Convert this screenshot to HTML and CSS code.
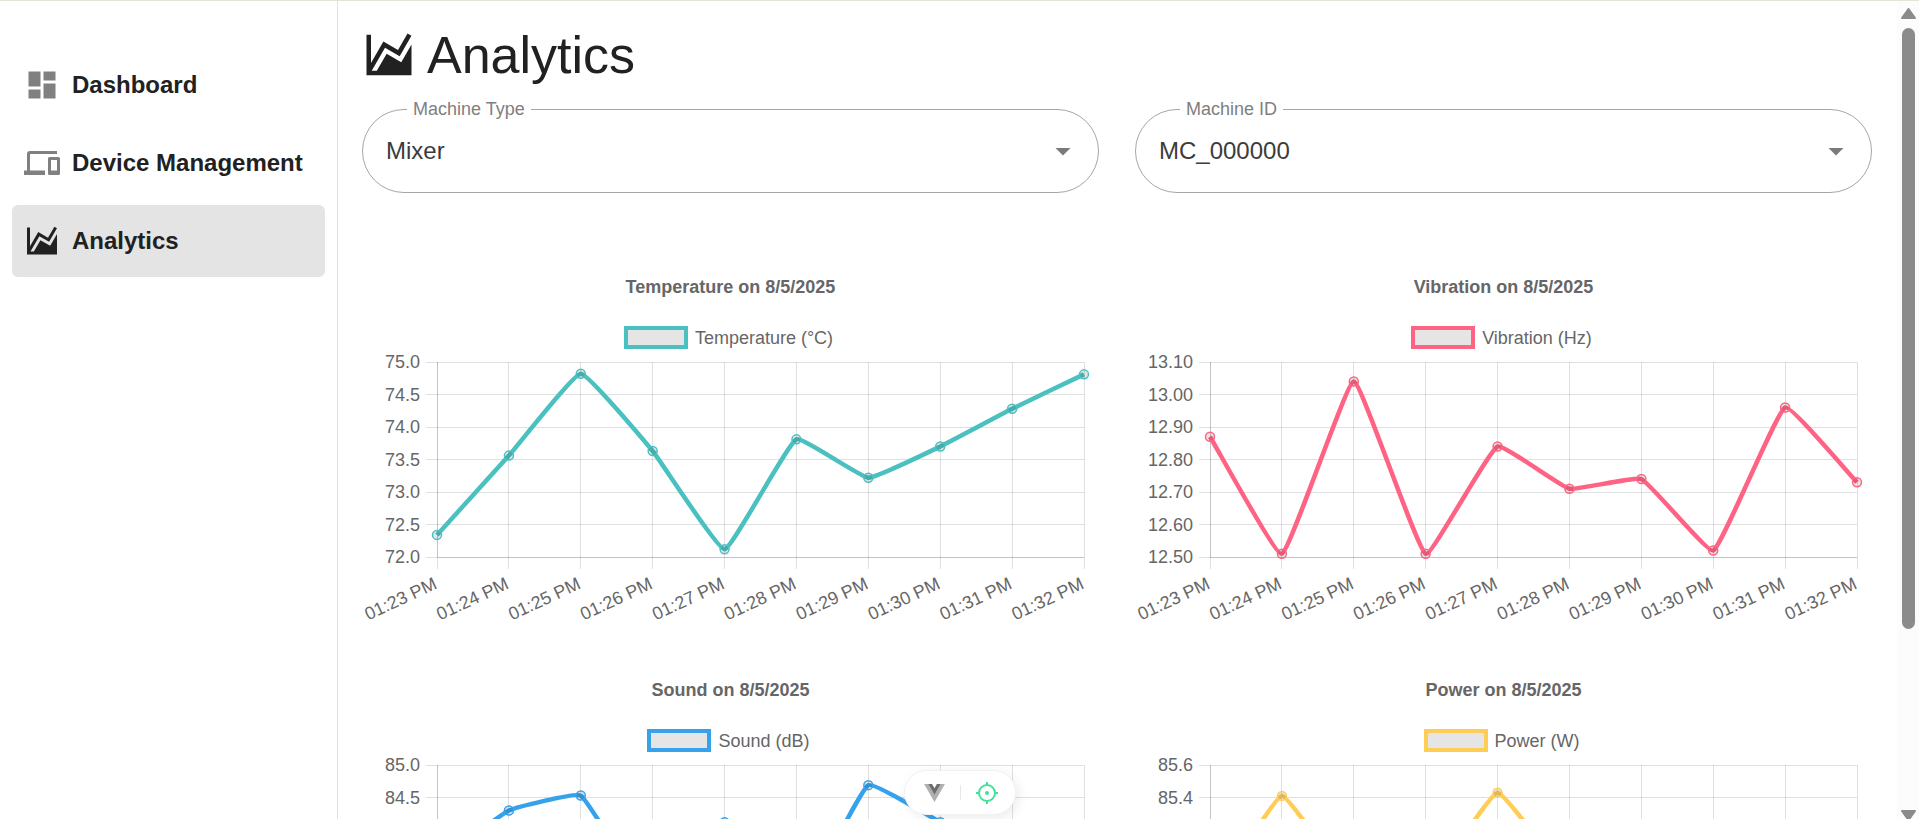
FILE: index.html
```html
<!DOCTYPE html>
<html lang="en">
<head>
<meta charset="utf-8">
<meta name="viewport" content="width=device-width, initial-scale=1">
<title>Analytics</title>
<link rel="stylesheet" href="styles.css">
</head>
<body>
<div class="app">
  <nav class="sidebar" aria-label="Main">
    <a class="nav-item" href="#dashboard">
      <svg class="nav-icon" viewBox="0 0 24 24" aria-hidden="true"><path d="M13,3V9H21V3M13,21H21V11H13M3,21H11V15H3M3,13H11V3H3V13Z"/></svg>
      <span>Dashboard</span>
    </a>
    <a class="nav-item" href="#devices">
      <svg class="nav-icon" viewBox="0 0 24 24" aria-hidden="true"><path d="M4,6H22V4H4A2,2 0 0,0 2,6V17H0V20H14V17H4V6M23,8H17A1,1 0 0,0 16,9V19A1,1 0 0,0 17,20H23A1,1 0 0,0 24,19V9A1,1 0 0,0 23,8M22,17H18V10H22V17Z"/></svg>
      <span>Device Management</span>
    </a>
    <a class="nav-item nav-item-active" href="#analytics" aria-current="page">
      <svg class="nav-icon" viewBox="0 0 24 24" aria-hidden="true"><path d="M17.45,15.18L22,7.31V21H2V3H4V15.54L9.5,6L16,9.78L20.24,2.45L21.97,3.45L16.74,12.5L10.23,8.75L4.31,19H6.57L10.96,11.44L17.45,15.18Z"/></svg>
      <span>Analytics</span>
    </a>
  </nav>

  <main class="content">
    <h1 class="page-title">
      <svg class="title-icon" viewBox="0 0 24 24" aria-hidden="true"><path d="M17.45,15.18L22,7.31V21H2V3H4V15.54L9.5,6L16,9.78L20.24,2.45L21.97,3.45L16.74,12.5L10.23,8.75L4.31,19H6.57L10.96,11.44L17.45,15.18Z"/></svg>
      <span>Analytics</span>
    </h1>

    <div class="filters">
      <div class="field">
        <label class="field-label" for="machine-type">Machine Type</label>
        <select class="field-select" id="machine-type"><option>Mixer</option></select>
        <svg class="field-arrow" viewBox="0 0 24 24" aria-hidden="true"><path d="M7,10L12,15L17,10H7Z"/></svg>
      </div>
      <div class="field">
        <label class="field-label" for="machine-id">Machine ID</label>
        <select class="field-select" id="machine-id"><option>MC_000000</option></select>
        <svg class="field-arrow" viewBox="0 0 24 24" aria-hidden="true"><path d="M7,10L12,15L17,10H7Z"/></svg>
      </div>
    </div>

    <div class="charts">
      <figure class="chart teal" data-chart="temperature">
        <figcaption class="chart-title">Temperature on 8/5/2025</figcaption>
        <div class="legend"><span class="legend-box"></span><span>Temperature (°C)</span></div>
      </figure>
      <figure class="chart pink" data-chart="vibration">
        <figcaption class="chart-title">Vibration on 8/5/2025</figcaption>
        <div class="legend"><span class="legend-box"></span><span>Vibration (Hz)</span></div>
      </figure>
      <figure class="chart blue" data-chart="sound">
        <figcaption class="chart-title">Sound on 8/5/2025</figcaption>
        <div class="legend"><span class="legend-box"></span><span>Sound (dB)</span></div>
      </figure>
      <figure class="chart yellow" data-chart="power">
        <figcaption class="chart-title">Power on 8/5/2025</figcaption>
        <div class="legend"><span class="legend-box"></span><span>Power (W)</span></div>
      </figure>
    </div>
  </main>

  <div class="scrollbar" aria-hidden="true">
    <svg class="scroll-arrow" viewBox="0 0 15 11"><path d="M7.5 1L14 10H1Z"/></svg>
    <div class="scroll-track"><div class="scroll-thumb"></div></div>
    <svg class="scroll-arrow" viewBox="0 0 15 11"><path d="M7.5 12L1 3H14Z"/></svg>
  </div>
</div>

<div class="devtools">
  <button class="devtools-button" type="button" aria-label="Toggle devtools">
    <svg class="vue-icon" viewBox="0 0 256 221" aria-hidden="true"><path fill="#b0b0b0" d="M0 0l128 220.8L256 0h-51.2L128 132.48 50.56 0z"/><path fill="#6e6e6e" d="M50.56 0L128 133.12 204.8 0h-47.36L128 51.2 97.92 0z"/></svg>
  </button>
  <span class="devtools-divider"></span>
  <button class="devtools-button" type="button" aria-label="Inspect component">
    <svg class="target-icon" viewBox="0 0 24 24" aria-hidden="true"><circle cx="12" cy="12" r="8"/><path d="M12 1V5M12 19V23M1 12H5M19 12H23"/><circle class="target-dot" cx="12" cy="12" r="1"/></svg>
  </button>
</div>
<script src="charts.js"></script>
</body>
</html>
```

FILE: styles.css
```css
* {
  box-sizing: border-box;
}

body {
  margin: 0;
  font-family: "Liberation Sans", Arial, sans-serif;
  color: #212121;
  background: #fff;
}

.app {
  display: flex;
  height: 100vh;
  border-top: 1px solid #e4e4d4;
}

.sidebar {
  display: flex;
  flex-direction: column;
  flex: none;
  gap: 6px;
  width: 338px;
  padding: 48px 12px;
  border-right: 1px solid #e0e0e0;
}

.nav-item {
  display: flex;
  align-items: center;
  gap: 12px;
  height: 72px;
  padding: 0 12px;
  border-radius: 6px;
  color: #212121;
  font-size: 24px;
  font-weight: 700;
  text-decoration: none;
  white-space: nowrap;
}

.nav-item-active {
  background: #e4e4e4;
}

.nav-icon {
  flex: none;
  width: 36px;
  height: 36px;
  fill: #808080;
}

.nav-item-active .nav-icon {
  fill: #212121;
}

.content {
  flex: 1;
  min-width: 0;
  padding: 24px 25px 24px 24px;
  overflow-y: auto;
  scrollbar-width: none;
}

.page-title {
  display: flex;
  align-items: center;
  gap: 11px;
  margin: 0 0 24px;
  font-size: 52px;
  font-weight: 400;
  line-height: 60px;
}

.title-icon {
  width: 54px;
  height: 54px;
  fill: #212121;
}

.filters,
.charts {
  display: grid;
  grid-template-columns: 1fr 1fr;
  column-gap: 36px;
}

.filters {
  margin-bottom: 68px;
}

.field {
  position: relative;
}

.field-label {
  position: absolute;
  top: -11px;
  left: 45px;
  padding: 0 6px;
  background: #fff;
  color: #808080;
  font-size: 18px;
  line-height: 22px;
}

.field-select {
  display: block;
  width: 100%;
  height: 84px;
  padding: 0 60px 2px 23px;
  border: 1px solid #a6a6a6;
  border-radius: 42px;
  appearance: none;
  background: none;
  color: #3c3c3c;
  font-family: inherit;
  font-size: 24px;
}

.field-arrow {
  position: absolute;
  top: 24px;
  right: 18px;
  width: 36px;
  height: 36px;
  fill: #7a7a7a;
  pointer-events: none;
}

.charts {
  row-gap: 35px;
}

.chart {
  margin: 0;
  color: #666;
  font-size: 18px;
  line-height: 22px;
}

.teal { --series: rgb(75, 192, 192); }
.pink { --series: rgb(255, 99, 132); }
.blue { --series: rgb(54, 162, 235); }
.yellow { --series: rgb(255, 205, 86); }

.chart-title {
  padding: 15px 0;
  font-weight: 700;
  text-align: center;
}

.legend {
  display: flex;
  align-items: center;
  justify-content: center;
  gap: 7px;
  margin-top: 13px;
  padding-right: 4px;
}

.legend-box {
  width: 64px;
  height: 23px;
  border: 4px solid var(--series);
  background: #e5e5e5;
}

.plot {
  display: block;
  width: 100%;
  height: auto;
  overflow: visible;
}

.grid-line {
  stroke: rgba(0, 0, 0, 0.12);
  shape-rendering: crispEdges;
}

.plot-label {
  fill: #666;
  font-size: 18px;
  text-anchor: end;
}

.series-line {
  fill: none;
  stroke: var(--series);
  stroke-width: 4.5;
}

.series-point {
  fill: rgba(0, 0, 0, 0.1);
  stroke: var(--series);
  stroke-width: 1.5;
}

.scrollbar {
  display: flex;
  flex-direction: column;
  align-items: center;
  flex: none;
  gap: 9px;
  width: 22px;
  padding-top: 7px;
  background: #fcfcfc;
}

.scroll-arrow {
  flex: none;
  width: 15px;
  height: 11px;
  fill: #8b8b8b;
  stroke: #8b8b8b;
  stroke-width: 2;
  stroke-linejoin: round;
}

.scroll-track {
  flex: 1;
}

.scroll-thumb {
  width: 13px;
  height: 78%;
  border-radius: 7px;
  background: #8b8b8b;
}

.devtools {
  position: fixed;
  bottom: 4px;
  left: 50%;
  display: flex;
  align-items: center;
  justify-content: center;
  gap: 12px;
  width: 112px;
  height: 45px;
  padding-left: 2px;
  border: 1px solid #f2f2f2;
  border-radius: 23px;
  background: #fff;
  box-shadow: 3px 3px 12px rgba(0, 0, 0, 0.08);
  transform: translateX(-50%);
}

.devtools-button {
  display: flex;
  align-items: center;
  justify-content: center;
  width: 27px;
  height: 28px;
  padding: 0;
  border: 0;
  background: none;
}

.vue-icon {
  width: 21px;
  height: 18px;
}

.devtools-divider {
  width: 1px;
  height: 15px;
  background: #e8e8e8;
}

.target-icon {
  width: 24px;
  height: 24px;
  fill: none;
  stroke: #42e09b;
  stroke-width: 2;
}

.target-dot {
  fill: #42e09b;
}
```

FILE: charts.js
```js
const SVG_NS = "http://www.w3.org/2000/svg";
const PLOT = { width: 737, height: 280, left: 75, right: 722, top: 13, bottom: 208 };
const TENSION = 0.1;

const times = ["01:23 PM", "01:24 PM", "01:25 PM", "01:26 PM", "01:27 PM",
  "01:28 PM", "01:29 PM", "01:30 PM", "01:31 PM", "01:32 PM"];

const charts = {
  temperature: { min: 72, max: 75, digits: 1,
    data: [72.34, 73.56, 74.82, 73.63, 72.12, 73.81, 73.22, 73.70, 74.28, 74.81] },
  vibration: { min: 12.5, max: 13.1, digits: 2,
    data: [12.87, 12.51, 13.04, 12.51, 12.84, 12.71, 12.74, 12.52, 12.96, 12.73] },
  sound: { min: 82, max: 85, digits: 1,
    data: [83.5, 84.3, 84.53, 82.9, 84.12, 82.8, 84.69, 84.12, 83.5, 83] },
  power: { min: 84.4, max: 85.6, digits: 1,
    data: [84.75, 85.41, 84.85, 84.85, 85.43, 84.9, 84.7, 84.9, 84.6, 84.8] }
};

function add(parent, name, attrs, text) {
  const node = document.createElementNS(SVG_NS, name);
  for (const key in attrs) node.setAttribute(key, attrs[key]);
  if (text) node.textContent = text;
  parent.appendChild(node);
  return node;
}

// Bezier path whose handles follow the chord between each point's neighbours.
function smoothPath(points) {
  const clamp = y => Math.min(PLOT.bottom, Math.max(PLOT.top, y));
  const handles = points.map((p, i) => {
    const prev = points[i - 1] || p;
    const next = points[i + 1] || p;
    const before = Math.hypot(p.x - prev.x, p.y - prev.y);
    const after = Math.hypot(next.x - p.x, next.y - p.y);
    const a = TENSION * before / (before + after);
    const b = TENSION * after / (before + after);
    const dx = next.x - prev.x;
    const dy = next.y - prev.y;
    return {
      inX: p.x - a * dx, inY: clamp(p.y - a * dy),
      outX: p.x + b * dx, outY: clamp(p.y + b * dy)
    };
  });
  let d = `M${points[0].x},${points[0].y}`;
  for (let i = 1; i < points.length; i++) {
    const from = handles[i - 1];
    const to = handles[i];
    d += `C${from.outX},${from.outY} ${to.inX},${to.inY} ${points[i].x},${points[i].y}`;
  }
  return d;
}

document.querySelectorAll("[data-chart]").forEach(figure => {
  const chart = charts[figure.dataset.chart];
  const svg = add(figure, "svg", {
    class: "plot", viewBox: `0 0 ${PLOT.width} ${PLOT.height}`, role: "img",
    "aria-label": figure.querySelector("figcaption").textContent
  });
  const stepX = (PLOT.right - PLOT.left) / (times.length - 1);
  const rows = 6;

  for (let i = 0; i <= rows; i++) {
    const y = PLOT.top + (PLOT.bottom - PLOT.top) * i / rows;
    const value = chart.max - (chart.max - chart.min) * i / rows;
    add(svg, "line", { class: "grid-line", x1: PLOT.left - 11, x2: PLOT.right, y1: y, y2: y });
    add(svg, "text", { class: "plot-label", x: PLOT.left - 17, y: y + 6 }, value.toFixed(chart.digits));
  }
  times.forEach((time, i) => {
    const x = PLOT.left + stepX * i;
    add(svg, "line", { class: "grid-line", x1: x, x2: x, y1: PLOT.top, y2: PLOT.bottom + 12 });
    add(svg, "text", { class: "plot-label",
      transform: `translate(${x + 1} ${PLOT.bottom + 31}) rotate(-25)` }, time);
  });
  add(svg, "line", { class: "grid-line", x1: PLOT.left, x2: PLOT.left, y1: PLOT.top, y2: PLOT.bottom });
  add(svg, "line", { class: "grid-line", x1: PLOT.left, x2: PLOT.right, y1: PLOT.bottom, y2: PLOT.bottom });

  const points = chart.data.map((value, i) => ({
    x: PLOT.left + stepX * i,
    y: PLOT.bottom - (value - chart.min) / (chart.max - chart.min) * (PLOT.bottom - PLOT.top)
  }));
  add(svg, "path", { class: "series-line", d: smoothPath(points) });
  points.forEach(p => add(svg, "circle", { class: "series-point", cx: p.x, cy: p.y, r: 4.5 }));
});
```
